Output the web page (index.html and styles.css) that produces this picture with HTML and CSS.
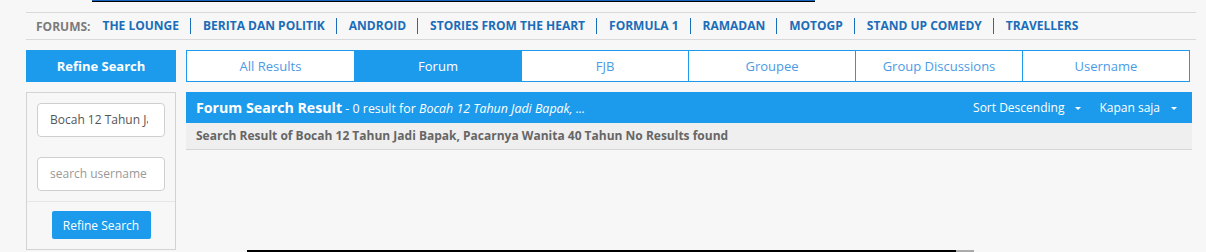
FILE: index.html
```html
<!DOCTYPE html>
<html>
<head>
<meta charset="utf-8">
<link rel="stylesheet" href="styles.css">
</head>
<body>
<div class="topstrip"></div>
<nav class="forums">
  <span class="label">FORUMS:</span>
  <a>THE LOUNGE</a>
  <a>BERITA DAN POLITIK</a>
  <a>ANDROID</a>
  <a>STORIES FROM THE HEART</a>
  <a>FORMULA 1</a>
  <a>RAMADAN</a>
  <a>MOTOGP</a>
  <a>STAND UP COMEDY</a>
  <a class="last">TRAVELLERS</a>
</nav>
<div class="main">
  <aside class="side">
    <div class="side-head">Refine Search</div>
    <div class="side-box">
      <div class="field-group">
        <div class="input"><span class="val">Bocah 12 Tahun Jadi Bapak, Pacarnya Wanita 40 Tahun</span></div>
        <div class="input placeholder"><span class="val">search username</span></div>
      </div>
      <div class="side-foot">
        <button class="btn">Refine Search</button>
      </div>
    </div>
  </aside>
  <section class="content">
    <div class="tabs">
      <div class="tab">All Results</div>
      <div class="tab active">Forum</div>
      <div class="tab">FJB</div>
      <div class="tab">Groupee</div>
      <div class="tab">Group Discussions</div>
      <div class="tab">Username</div>
    </div>
    <div class="result-head">
      <div class="title"><b>Forum Search Result</b> - 0 result for <i>Bocah 12 Tahun Jadi Bapak, ...</i></div>
      <div class="sorts">
        <span class="dd">Sort Descending <span class="caret"></span></span>
        <span class="dd">Kapan saja <span class="caret"></span></span>
      </div>
    </div>
    <div class="result-row">Search Result of Bocah 12 Tahun Jadi Bapak, Pacarnya Wanita 40 Tahun No Results found</div>
  </section>
</div>
<div class="hscroll"><div class="thumb"></div><div class="rest"></div></div>
</body>
</html>
```
FILE: styles.css
```css
html, body {
  margin: 0;
  padding: 0;
  background: #f7f7f7;
  font-family: "Open Sans", "Noto Sans", sans-serif;
  height: 252px;
  overflow: hidden;
}
.topstrip {
  margin-left: 92px;
  width: 723px;
  height: 1px;
  background: #1565c0;
  border-bottom: 1px solid #000;
}
.forums {
  margin: 10px 10px 0 26px;
  border-top: 1px solid #d9d9d9;
  border-bottom: 1px solid #d9d9d9;
  height: 26px;
  display: flex;
  align-items: center;
  padding-left: 10px;
  font-size: 12px;
  font-weight: 700;
  letter-spacing: 0;
}
.forums .label {
  color: #7b7b7b;
  margin-right: 12px;
}
.forums a {
  color: #1a6db8;
  padding: 0 11px 0 12px;
  border-right: 1px solid #1a6db8;
  line-height: 16px;
}
.forums a:first-of-type { padding-left: 0; }
.forums a.last { border-right: none; }
.main {
  display: flex;
  gap: 10px;
  margin-top: 10px;
  padding-left: 26px;
}
.side { width: 150px; }
.side-head {
  height: 32px;
  background: #1c9bec;
  color: #fff;
  font-weight: 700;
  font-size: 13px;
  display: flex;
  align-items: center;
  justify-content: center;
}
.side-box {
  margin-top: 10px;
  border: 1px solid #d3d3d3;
  background: #f7f7f7;
  height: 158px;
  box-sizing: border-box;
}
.field-group {
  padding: 10px;
  display: flex;
  flex-direction: column;
  gap: 20px;
  border-bottom: 1px solid #e6e6e6;
}
.input {
  height: 34px;
  box-sizing: border-box;
  border: 1px solid #cfcfcf;
  border-radius: 4px;
  background: #fff;
  padding: 0 16px 0 12px;
  font-size: 12px;
  color: #555;
  line-height: 32px;
}
.input .val {
  display: block;
  white-space: nowrap;
  overflow: hidden;
}
.input.placeholder { color: #999; }
.side-foot {
  display: flex;
  justify-content: center;
  padding-top: 9px;
}
.btn {
  width: 99px;
  height: 28px;
  border: none;
  border-radius: 2px;
  background: #1c9bec;
  color: #fff;
  font-family: inherit;
  font-size: 12px;
  padding: 0;
}
.content { width: 1006px; }
.tabs {
  width: 1004px;
  height: 32px;
  display: grid;
  grid-template-columns: repeat(6, 1fr);
  border: 1px solid #1c9bec;
  box-sizing: border-box;
  background: #fff;
}
.tab {
  display: flex;
  align-items: center;
  justify-content: center;
  color: #4a9be6;
  font-size: 13px;
  border-left: 1px solid #1c9bec;
}
.tab:first-child { border-left: none; }
.tab.active {
  background: #1c9bec;
  color: #fff;
}
.result-head {
  margin-top: 10px;
  height: 31px;
  background: #1c9bec;
  color: #fff;
  display: flex;
  align-items: center;
  justify-content: space-between;
  padding: 0 10px;
  font-size: 12.4px;
}
.result-head b { font-size: 14.2px; font-weight: 700; }
.sorts { display: flex; gap: 18px; padding-right: 5px; font-size: 12px; }
.dd { display: inline-flex; align-items: center; }
.caret {
  display: inline-block;
  width: 0;
  height: 0;
  border-left: 3px solid transparent;
  border-right: 3px solid transparent;
  border-top: 3px solid #fff;
  margin-left: 11px;
  margin-top: 2px;
}
.result-row {
  height: 27px;
  box-sizing: border-box;
  background: #efefef;
  border-bottom: 1px solid #d6d6d6;
  color: #666;
  font-weight: 700;
  font-size: 12px;
  line-height: 26px;
  padding-left: 10px;
}
.hscroll {
  position: absolute;
  left: 247px;
  top: 250px;
  height: 2px;
  display: flex;
}
.hscroll .thumb { width: 709px; background: #000; }
.hscroll .rest { width: 18px; background: #aaa; }
```
